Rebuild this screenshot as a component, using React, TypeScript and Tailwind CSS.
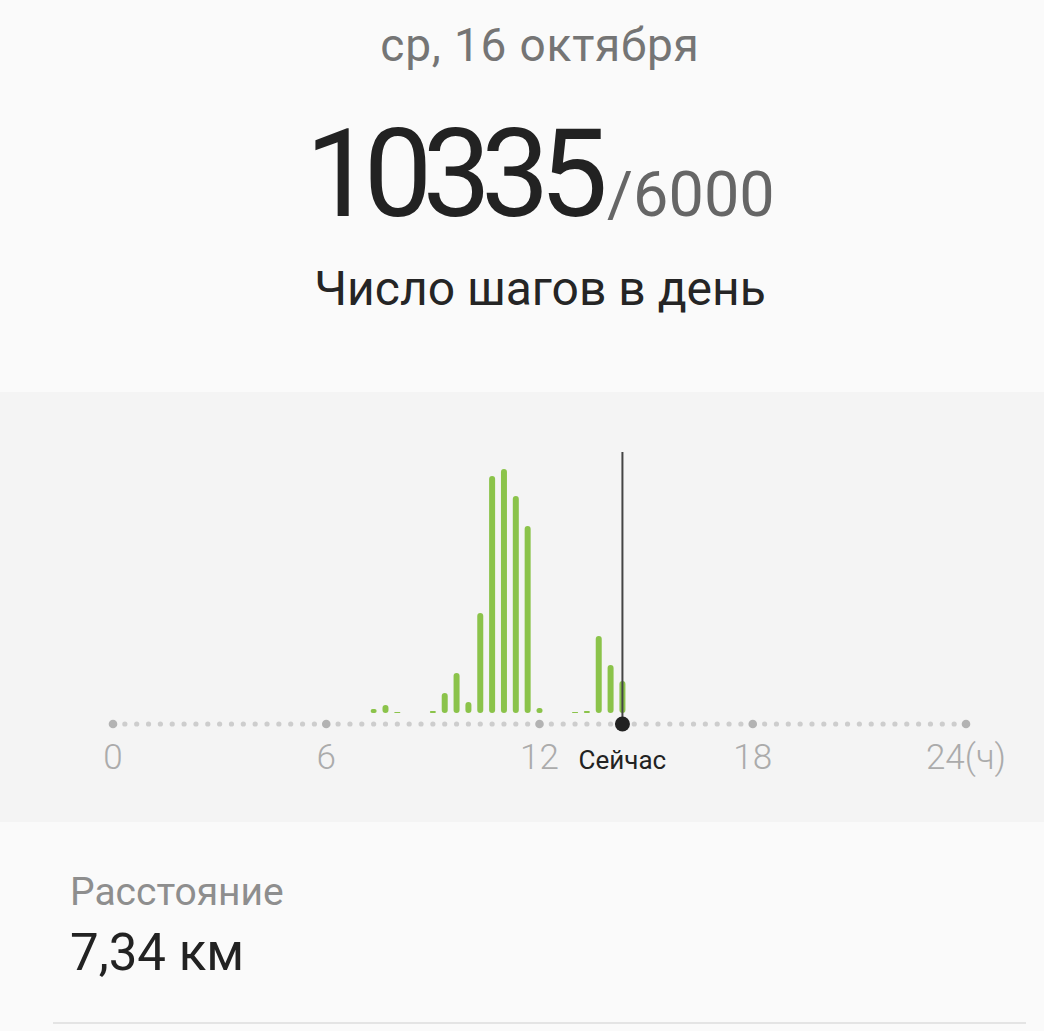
import React from "react";

const AXIS_LEFT = 113;
const AXIS_RIGHT = 966;
const STEP = (AXIS_RIGHT - AXIS_LEFT) / 72;
const AXIS_Y = 332;
const BAR_BOTTOM = 321;

const bars: Record<number, number> = {
  22: 4,
  23: 8,
  24: 1,
  27: 2,
  28: 20,
  29: 40,
  30: 11,
  31: 100,
  32: 237,
  33: 244,
  34: 217,
  35: 187,
  36: 5,
  39: 1,
  40: 2,
  41: 77,
  42: 48,
  43: 32,
};

const NOW_INDEX = 43;

function Chart() {
  const dots = [];
  for (let i = 0; i <= 72; i++) {
    const x = AXIS_LEFT + i * STEP;
    const major = i % 18 === 0;
    dots.push(
      <circle
        key={i}
        cx={x}
        cy={AXIS_Y}
        r={major ? 4.3 : 2.6}
        fill={major ? "#b3b3b3" : "#cdcdcd"}
      />
    );
  }
  const barEls = Object.entries(bars).map(([k, h]) => {
    const i = Number(k);
    const x = AXIS_LEFT + i * STEP;
    const rx = Math.min(3, h / 2);
    return (
      <rect
        key={k}
        x={x - 3}
        y={BAR_BOTTOM - h}
        width={6}
        height={h}
        rx={rx}
        fill="#8bc34a"
      />
    );
  });
  const nowX = AXIS_LEFT + NOW_INDEX * STEP;
  const labels = [
    { t: "0", i: 0 },
    { t: "6", i: 18 },
    { t: "12", i: 36 },
    { t: "18", i: 54 },
    { t: "24(ч)", i: 72 },
  ];
  return (
    <svg width="1044" height="430" viewBox="0 0 1044 430" className="block">
      {barEls}
      {dots}
      <line x1={nowX} y1={60} x2={nowX} y2={AXIS_Y} stroke="#444" strokeWidth={2} />
      <circle cx={nowX} cy={AXIS_Y} r={7.5} fill="#222" />
      {labels.map((l) => (
        <text
          key={l.t}
          x={AXIS_LEFT + l.i * STEP}
          y={377}
          textAnchor="middle"
          fontFamily="Roboto, sans-serif"
          fontSize={35}
          fontWeight={300}
          fill="#ababab"
        >
          {l.t}
        </text>
      ))}
      <text
        x={nowX}
        y={377}
        textAnchor="middle"
        fontFamily="Roboto, sans-serif"
        fontSize={26}
        fill="#222"
      >
        Сейчас
      </text>
    </svg>
  );
}

export default function App() {
  return (
    <div
      className="w-[1044px] h-[1031px] overflow-hidden bg-[#fafafa] flex flex-col"
      style={{ fontFamily: "Roboto, 'Noto Sans', sans-serif" }}
    >
      <div className="flex flex-col items-center pl-[36px]">
        <div className="mt-[15px] text-[46px] leading-[60px] tracking-[0.8px] text-[#757575]">
          ср, 16 октября
        </div>
        <div className="mt-[39px] h-[122px] text-center text-[122px] leading-[122px] whitespace-nowrap">
          <span className="text-[#222] tracking-[-10px]">10335</span>
          <span className="text-[63px] leading-none text-[#666] ml-[9px]">/6000</span>
        </div>
        <div className="mt-[25px] text-[48px] leading-[56px] text-[#252525]">
          Число шагов в день
        </div>
      </div>
      <div className="mt-[75px] h-[430px] shrink-0 bg-[#f4f4f4]">
        <Chart />
      </div>
      <div className="pl-[70px] pt-[46px]">
        <div className="text-[39px] leading-[48px] text-[#8e8e8e]">Расстояние</div>
        <div className="mt-[7px] text-[51px] leading-[60px] text-[#222]">7,34 км</div>
      </div>
      <div className="mt-[39px] ml-[53px] mr-[18px] h-[2px] shrink-0 bg-[#e4e4e4]" />
    </div>
  );
}
